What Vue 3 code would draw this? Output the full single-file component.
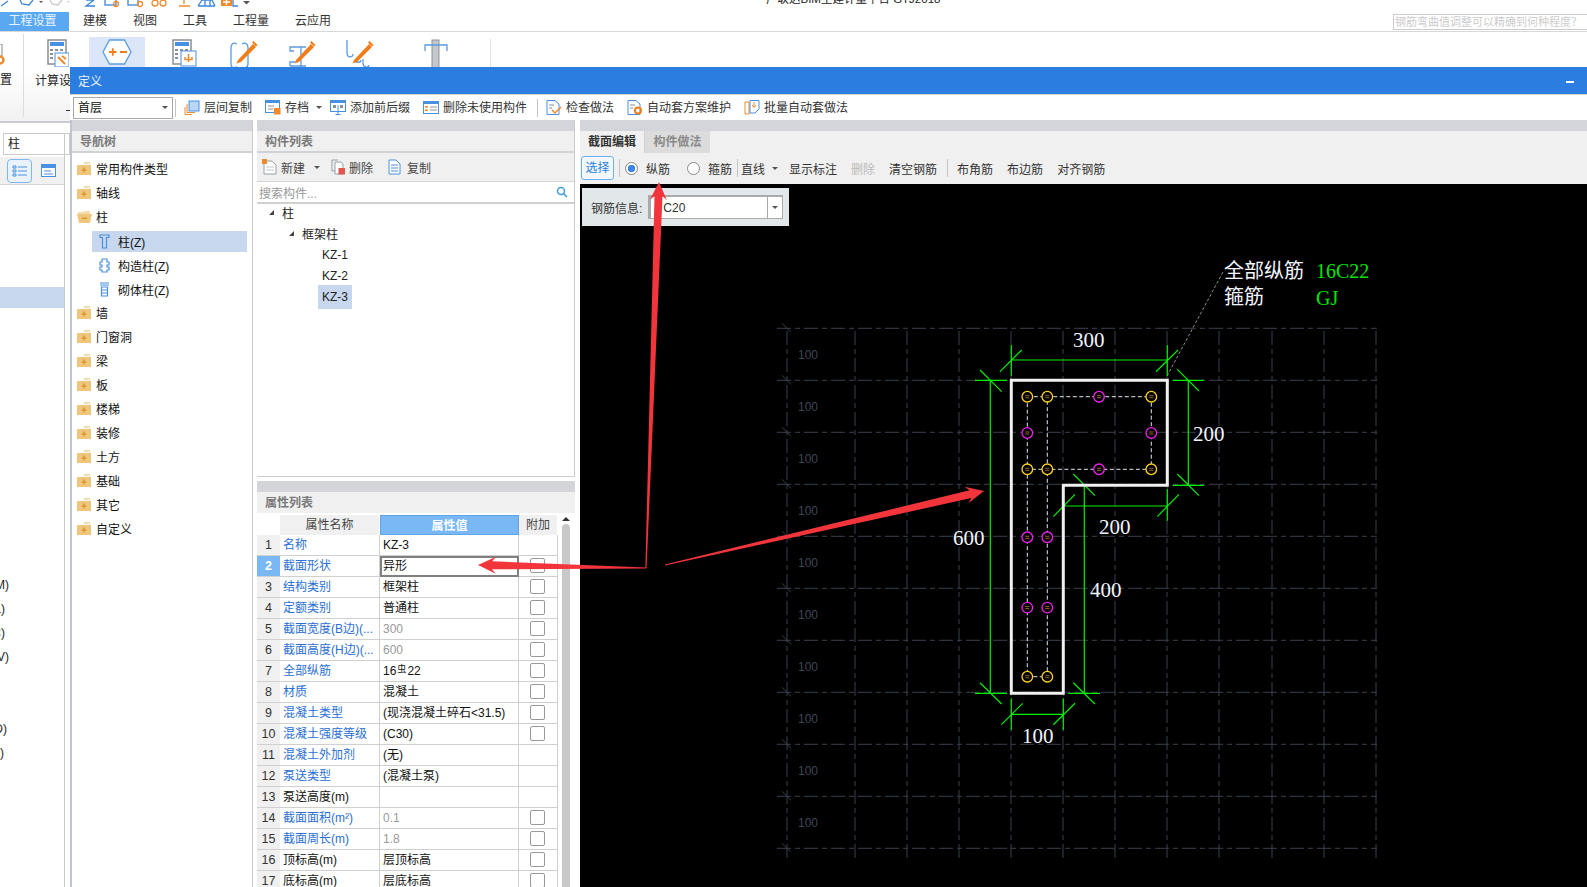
<template>
  <div class="app">
    <!-- quick access row, mostly cut off by the top of the shot -->
    <div class="quick">
      <svg width="260" height="12" viewBox="0 0 260 12" fill="none" stroke="#3d86d8" stroke-width="1.3">
        <path d="M1 6 L8 1" />
        <path d="M20 0 L22 4 L29 5 L33 0" />
        <path d="M39 1 h4 l-2 2z" fill="#555" stroke="none" />
        <path d="M50 0 L52 4 L58 5 L62 0" stroke="#c8c8c8" />
        <path d="M67 1 h3 l-1.500 2z" fill="#ccc" stroke="none" />
        <path d="M86 0 L94 0 M94 0 L86 6 L95 6" />
        <rect x="105" y="-5" width="11" height="10" />
        <circle cx="116" cy="4" r="2.500" stroke="#ef8a2c" />
        <rect x="128" y="-5" width="10" height="10" />
        <circle cx="140" cy="4" r="2.500" stroke="#ef8a2c" />
        <circle cx="155" cy="3" r="3" stroke="#ef8a2c" />
        <circle cx="163" cy="3" r="3" stroke="#ef8a2c" />
        <path d="M179 6 h11 M184 0 v4" stroke="#ef8a2c" />
        <path d="M198 6 L202 0 H212 L215 6 M198 6 H215 M205 0 V6 M210 0 V6" />
        <rect x="221" y="-4" width="11" height="10" fill="#ef8a2c" stroke="none" />
        <path d="M226.500 -1 V5 M223 2 H230" stroke="#fff" />
        <path d="M233 -2 V6 H238" />
        <path d="M243 1 h7 l-3.500 3.500z" fill="#555" stroke="none" />
      </svg>
      <span class="app-title">广联达BIM土建计量平台 GTJ2018</span>
    </div>

    <div class="menu">
      <span class="menu-on">工程设置</span>
      <span v-for="m in menus" :key="m">{{ m }}</span>
      <div class="ask">钢筋弯曲值调整可以精确到何种程度？</div>
    </div>

    <div class="ribbon">
      <div class="rb-first">
        <svg class="gear" width="6" height="22" viewBox="0 0 6 22" fill="none">
          <path d="M0 0 H2 V12" stroke="#888" />
          <circle cx="0" cy="16" r="3.500" stroke="#ef8a2c" stroke-width="2.500" />
        </svg>
        <span class="rb-cut">置</span>
      </div>
      <div class="rb-calc">
        <svg width="22" height="28" viewBox="0 0 22 28">
          <rect x="1" y="1" width="18" height="24" fill="#fff" stroke="#8a8f96" stroke-width="1.500" />
          <rect x="3" y="3" width="14" height="4" fill="#4a90e2" />
          <path d="M3 10 h3 v2 h-3z M8 10 h3 v2 h-3z M13 10 h3 v2 h-3z M3 14 h3 v2 h-3z M8 14 h3 v2 h-3z M3 18 h3 v2 h-3z" fill="#8a8f96" />
          <rect x="8" y="14" width="14" height="14" fill="#fff" stroke="#4a90e2" />
          <path d="M11 18 L18 25 M15 17 L19 20" stroke="#ef8a2c" stroke-width="2" />
        </svg>
        <span class="rb-label">计算设置</span>
        <i class="rb-mark"></i>
      </div>
      <div class="rb-hex">
        <svg width="30" height="26" viewBox="0 0 30 26" fill="none">
          <path d="M7.500 1 H22.500 L29 13 L22.500 25 H7.500 L1 13z" fill="#fff" stroke="#5b9be0" stroke-width="1.300" />
          <path d="M7 13 H14.500 M10.800 9.200 V16.800 M18 13 H25" stroke="#ef7d1a" stroke-width="1.800" />
        </svg>
      </div>
      <div class="rb-tools">
        <svg width="28" height="29" viewBox="0 0 28 29">
          <rect x="1" y="1" width="18" height="24" fill="#fff" stroke="#8a8f96" stroke-width="1.500" />
          <rect x="3" y="3" width="14" height="4" fill="#4a90e2" />
          <path d="M3 10 h3 v2 h-3z M8 10 h3 v2 h-3z M13 10 h3 v2 h-3z M3 14 h3 v2 h-3z M3 18 h3 v2 h-3z" fill="#8a8f96" />
          <rect x="9" y="12" width="15" height="15" fill="#fff" stroke="#4a90e2" />
          <path d="M16.500 15 V23 M13 18 V20.500 H20 V18" stroke="#ef8a2c" stroke-width="1.500" fill="none" />
        </svg>
        <svg v-for="h in hooks" :key="h" width="28" height="29" viewBox="0 0 28 29" fill="none">
          <path :d="h" stroke="#5b9be0" stroke-width="1.300" />
          <path d="M8 21 L23 5 L26 8 L11 23 L6.500 24.500z" fill="#ef7d1a" />
          <path d="M23.500 2 L27.500 6 L26 7.500 L22 3.500z" fill="#ef7d1a" />
        </svg>
        <svg class="rb-t" width="24" height="29" viewBox="0 0 24 29" fill="none">
          <rect x="8" y="1" width="7" height="28" fill="#c3c7cc" stroke="#8f949a" />
          <path d="M1 12 V6 H23 V12" stroke="#5b9be0" stroke-width="1.300" />
        </svg>
        <i class="rb-sep"></i>
      </div>
    </div>

    <div class="side">
      <div class="side-input">柱</div>
      <div class="side-tools">
        <span class="side-btn">
          <svg width="16" height="14" viewBox="0 0 16 14" fill="none" stroke="#4a90e2">
            <path d="M1 2 h3 v2 h-3z M1 6 h3 v2 h-3z M1 10 h3 v2 h-3z M6 3 H15 M6 7 H15 M6 11 H15" />
          </svg>
        </span>
        <svg class="side-ico" width="15" height="13" viewBox="0 0 15 13">
          <rect x="0.500" y="0.500" width="14" height="12" fill="#fff" stroke="#4a90e2" />
          <rect x="0" y="0" width="15" height="4" fill="#4a90e2" />
          <path d="M3 7 H10 M3 10 H12" stroke="#4a90e2" />
        </svg>
      </div>
      <div class="side-list">
        <div v-for="(r, i) in sideRows" :key="i" class="side-row" :class="{ on: i === 0 }">
          <span class="side-clip" :style="{ width: r.w + 'px' }">{{ r.t }}</span>
        </div>
      </div>
    </div>

    <!-- 定义 window -->
    <div class="win">
      <div class="win-title">
        <span>定义</span>
        <i class="win-min"></i>
      </div>

      <div class="win-tools">
        <div class="combo">首层<i class="tri"></i></div>
        <i class="sep"></i>
        <div class="tool">
          <svg width="16" height="15" viewBox="0 0 16 15" fill="none">
            <rect x="5" y="1" width="10" height="10" fill="#b9d6f6" stroke="#4a90e2" />
            <path d="M3 4 V12.500 H11 M1 7 V14.500 H8" stroke="#ef8a2c" />
          </svg>
          层间复制
        </div>
        <div class="tool tool-drop">
          <svg width="16" height="15" viewBox="0 0 16 15" fill="none">
            <rect x="0.500" y="0.500" width="14" height="12" fill="#fff" stroke="#4a90e2" />
            <rect x="0" y="0" width="15" height="3" fill="#4a90e2" />
            <path d="M3 6 H9 M3 9 H8" stroke="#8a8f96" />
            <rect x="9" y="8" width="6.500" height="6.500" fill="#ef8a2c" />
          </svg>
          存档<i class="tri tri-gap"></i>
        </div>
        <div class="tool">
          <svg width="16" height="15" viewBox="0 0 16 15" fill="none">
            <rect x="0.500" y="0.500" width="15" height="11" fill="#fff" stroke="#4a90e2" />
            <rect x="0" y="0" width="16" height="3" fill="#4a90e2" />
            <path d="M3 5 h3 v3 h-3z M10 5 h3 v3 h-3z" fill="#8a8f96" />
            <path d="M8 5 V14 M5.500 14.500 H10.500" stroke="#4a90e2" />
          </svg>
          添加前后缀
        </div>
        <div class="tool">
          <svg width="16" height="15" viewBox="0 0 16 15" fill="none">
            <rect x="0.500" y="1.500" width="15" height="12" fill="#fff" stroke="#4a90e2" />
            <rect x="0" y="1" width="16" height="3" fill="#4a90e2" />
            <path d="M2 6 h3 v1.500 h-3z M2 9.500 h3 v1.500 h-3z" fill="#ef8a2c" />
            <path d="M7 7 H14 M7 10 H14" stroke="#8a8f96" />
          </svg>
          删除未使用构件
        </div>
        <i class="sep"></i>
        <div class="tool">
          <svg width="16" height="15" viewBox="0 0 16 15" fill="none">
            <path d="M1 .5 H9 L13 4 V14.500 H1z" fill="#fff" stroke="#4a90e2" />
            <path d="M3 5 H8 M3 8 H6" stroke="#8a8f96" />
            <path d="M6 10 L9 13 L15 7" stroke="#ef8a2c" stroke-width="1.500" />
          </svg>
          检查做法
        </div>
        <div class="tool">
          <svg width="16" height="15" viewBox="0 0 16 15" fill="none">
            <path d="M1 .5 H9 L13 4 V14.500 H1z" fill="#fff" stroke="#4a90e2" />
            <path d="M3 5 H8 M3 8 H6" stroke="#8a8f96" />
            <circle cx="11" cy="10.500" r="3" stroke="#ef7d1a" stroke-width="2" />
          </svg>
          自动套方案维护
        </div>
        <div class="tool">
          <svg width="16" height="15" viewBox="0 0 16 15" fill="none">
            <path d="M1 2 H5 V14 H1z" stroke="#ef8a2c" />
            <path d="M6 .5 H15 V9 L11 13 H6z" fill="#fff" stroke="#4a90e2" />
            <path d="M10 2 V7 M8 5 L10 7.500 L12 5" stroke="#ef8a2c" />
          </svg>
          批量自动套做法
        </div>
      </div>

      <div class="win-body">
        <!-- nav tree -->
        <section class="nav">
          <header class="head">导航树</header>
          <div class="nav-list">
            <div v-for="n in navRows" :key="n.t" class="nav-row" :class="{ sub: n.sub, on: n.on }">
              <svg v-if="n.sub" width="11" height="15" viewBox="0 0 11 15" fill="none" stroke="#4a90e2" stroke-width="1.200">
                <path v-if="n.kind === 'z'" d="M1 1 H10 V3.500 H7.500 V14 H3.500 V3.500 H1z" />
                <path v-else-if="n.kind === 'g'" d="M3 1 H8 V4 H10 V7 H8 V9 H10 V12 H8 V14 H3 V12 H1 V9 H3 V7 H1 V4 H3z" />
                <path v-else d="M1 1 H10 M1 3 H10 M2.500 5 H8.500 V14 H2.500z M2.500 8 H8.500 M2.500 11 H8.500" />
              </svg>
              <svg v-else width="15" height="14" viewBox="0 0 15 14">
                <template v-if="n.open">
                  <path d="M1 2 H6 L7 1 H13 V4 H1z" fill="#f6dca8" />
                  <path d="M0 4 H15 L13 13 H2z" fill="#efc67c" />
                  <rect x="5" y="7.500" width="5" height="1.500" fill="#d89a30" />
                </template>
                <template v-else>
                  <path d="M7 0 H13 V2 H7z" fill="#f6dca8" />
                  <rect x="0" y="3" width="14" height="10" fill="#efc67c" />
                  <path d="M7 5.500 V10.500 M4.500 8 H9.500" stroke="#d89a30" stroke-width="1.500" />
                </template>
              </svg>
              <span>{{ n.t }}</span>
            </div>
          </div>
        </section>

        <div class="mid">
          <!-- member list -->
          <section class="members">
            <header class="head">构件列表</header>
            <div class="mem-tools">
              <span class="mt">
                <svg width="15" height="16" viewBox="0 0 15 16" fill="none">
                  <path d="M2 2 H10 L14 6 V15 H2z" fill="#fff" stroke="#9aa0a6" />
                  <path d="M4 8 H12 M4 11 H12" stroke="#c3c7cc" />
                  <rect x="0" y="0" width="5" height="5" fill="#ef8a2c" />
                </svg>
                新建<i class="tri tri-gap"></i>
              </span>
              <span class="mt mt-narrow">
                <svg width="15" height="16" viewBox="0 0 15 16" fill="none">
                  <path d="M1 1 H7 M1 1 V12 H4" stroke="#9aa0a6" />
                  <path d="M4 3 H10 L12 5 V15 H4z" fill="#fff" stroke="#9aa0a6" />
                  <rect x="7.500" y="9" width="6.500" height="6.500" fill="#e2564f" />
                </svg>
                删除
              </span>
              <span class="mt mt-copy">
                <svg width="15" height="16" viewBox="0 0 15 16" fill="none">
                  <path d="M1 1 H8 L12 5 V15 H1z" fill="#fff" stroke="#4a90e2" />
                  <path d="M3 6 H10 M3 9 H10 M3 12 H10" stroke="#4a90e2" />
                </svg>
                复制
              </span>
            </div>
            <div class="search">
              <span>搜索构件...</span>
              <svg width="12" height="12" viewBox="0 0 12 12" fill="none" stroke="#3d9be0" stroke-width="1.500">
                <circle cx="5" cy="5" r="3.500" />
                <path d="M7.500 7.500 L11 11" />
              </svg>
            </div>
            <div class="tree">
              <div class="tree-row lv0"><i class="twist"></i>柱</div>
              <div class="tree-row lv1"><i class="twist"></i>框架柱</div>
              <div class="tree-row lv2">KZ-1</div>
              <div class="tree-row lv2">KZ-2</div>
              <div class="tree-row lv2"><span class="tree-on">KZ-3</span></div>
            </div>
          </section>

          <!-- attribute table -->
          <section class="attrs">
            <header class="head">属性列表</header>
            <div class="attr-wrap">
              <div class="attr-table">
                <div class="hd corner"></div>
                <div class="hd">属性名称</div>
                <div class="hd hd-on">属性值</div>
                <div class="hd">附加</div>
                <template v-for="r in attrRows" :key="r.n">
                  <div class="num" :class="{ 'num-on': r.n === 2 }">{{ r.n }}</div>
                  <div class="cell" :class="{ link: r.link }">{{ r.name }}</div>
                  <div class="cell" :class="{ dim: r.dim, picked: r.n === 2 }">
                    <template v-if="r.n === 7">16<small class="bar-mark">虫</small>22</template>
                    <template v-else>{{ r.val }}</template>
                  </div>
                  <div class="cell chk"><i v-if="r.chk" class="box"></i></div>
                </template>
              </div>
              <div class="scroll"><i class="scroll-up"></i><i class="thumb"></i></div>
            </div>
          </section>
        </div>

        <!-- section editor -->
        <section class="editor">
          <div class="tabs">
            <span class="tab tab-on">截面编辑</span>
            <span class="tab">构件做法</span>
          </div>
          <div class="ed-tools">
            <span class="pick">选择</span>
            <i class="sep ed-sep"></i>
            <span class="radio-item"><i class="radio radio-on"></i>纵筋</span>
            <span class="radio-item last"><i class="radio"></i>箍筋</span>
            <i class="sep ed-sep ed-sep2"></i>
            <span class="line-drop">直线<i class="tri tri-gap"></i></span>
            <span>显示标注</span>
            <span class="off">删除</span>
            <span>清空钢筋</span>
            <i class="sep ed-sep ed-sep3"></i>
            <span>布角筋</span>
            <span>布边筋</span>
            <span>对齐钢筋</span>
          </div>
          <div class="canvas">
            <svg class="cad" width="1007" height="703" viewBox="580 184 1007 703">
              <g stroke="#3a414e" stroke-width="1" fill="none" stroke-dasharray="14 4 5 4">
                <path v-for="y in gridY" :key="'h' + y" :d="`M777 ${y} H1377`" />
                <path v-for="x in gridX" :key="'v' + x" :d="`M${x} 331 V860`" />
              </g>
              <g stroke="#3a414e" fill="none">
                <path v-for="y in gridY" :key="'t' + y" :d="`M782 ${y - 5} L791 ${y + 4}`" />
              </g>
              <text v-for="y in labelY" :key="'l' + y" x="798" :y="y" class="grid-label">100</text>

              <path d="M1167 376 L1223 272" stroke="#8a8a8a" stroke-width="1" stroke-dasharray="3 2" fill="none" />

              <!-- dimensions -->
              <g stroke="#00f000" stroke-width="1.200" fill="none">
                <path v-for="d in dims" :key="d" :d="d" />
              </g>

              <!-- stirrups -->
              <g stroke="#dfe6f2" stroke-width="1" stroke-dasharray="4 2.500" fill="none">
                <path d="M1027.300 396.700 H1151.300 V469.300 H1027.300" />
                <path d="M1027.300 396.700 V676.700 H1047.300 V396.700" />
              </g>

              <path d="M1011.300 380.300 H1167.300 V485.300 H1063.300 V693.300 H1011.300z" fill="none" stroke="#f0f0f0" stroke-width="3" />

              <!-- bars -->
              <g v-for="b in bars" :key="b.x + '-' + b.y">
                <circle :cx="b.x" :cy="b.y" r="5.300" fill="#000" :stroke="b.c" stroke-width="1.300" />
                <path :d="`M${b.x - 2} ${b.y - 1} h4 M${b.x - 2} ${b.y + 1} h4`" stroke="#d9913a" stroke-width="0.700" />
              </g>

              <g class="dim-text">
                <text x="1073" y="347">300</text>
                <text x="1193" y="441">200</text>
                <text x="1099" y="534">200</text>
                <text x="1090" y="597">400</text>
                <text x="953" y="545">600</text>
                <text x="1022" y="743">100</text>
              </g>
              <text x="1224" y="278" class="cad-cn">全部纵筋</text>
              <text x="1224" y="304" class="cad-cn">箍筋</text>
              <text x="1316" y="278" class="cad-code">16C22</text>
              <text x="1316" y="305" class="cad-code">GJ</text>
            </svg>

            <div class="bar-info">
              <span>钢筋信息:</span>
              <div class="bar-combo">
                <span class="bar-val">C20</span>
                <span class="bar-arrow"><i class="tri"></i></span>
              </div>
            </div>
          </div>
        </section>
      </div>
    </div>

    <!-- red annotation arrows drawn over the shot -->
    <svg class="arrows" width="1587" height="887" viewBox="0 0 1587 887">
      <polygon v-for="a in arrows" :key="a" :points="a" fill="#f2353b" />
    </svg>
  </div>
</template>

<script setup>
const menus = ['建模', '视图', '工具', '工程量', '云应用']

const hooks = [
  'M7 5 C3 3 1 5 1 9 V25 C1 29 3 29 7 28 M12 5 C16 3 18 5 18 9 V25 C18 29 14 29 12 28',
  'M6 12 H2 V8 H18 M13 8 V29 M2 27 V23 H7 M2 27 H18',
  'M1 1 V14 C1 19 7 19 7 15 M9 21 C9 24 15 24 15 21 M17 20 V24 C17 29 23 29 23 26',
]

const sideTails = {
  12: { t: '(M)', w: 9 },
  13: { t: '(L)', w: 5 },
  14: { t: '(C)', w: 5 },
  15: { t: '(V)', w: 9 },
  18: { t: '(D)', w: 7 },
  19: { t: ')', w: 4 },
}
const sideRows = Array.from({ length: 20 }, (_, i) => sideTails[i] || { t: '', w: 9 })

const navRows = [
  { t: '常用构件类型' },
  { t: '轴线' },
  { t: '柱', open: true },
  { t: '柱(Z)', sub: true, on: true, kind: 'z' },
  { t: '构造柱(Z)', sub: true, kind: 'g' },
  { t: '砌体柱(Z)', sub: true, kind: 'q' },
  { t: '墙' },
  { t: '门窗洞' },
  { t: '梁' },
  { t: '板' },
  { t: '楼梯' },
  { t: '装修' },
  { t: '土方' },
  { t: '基础' },
  { t: '其它' },
  { t: '自定义' },
]

const attrRows = [
  { n: 1, name: '名称', val: 'KZ-3', link: true },
  { n: 2, name: '截面形状', val: '异形', link: true, chk: true },
  { n: 3, name: '结构类别', val: '框架柱', link: true, chk: true },
  { n: 4, name: '定额类别', val: '普通柱', link: true, chk: true },
  { n: 5, name: '截面宽度(B边)(...', val: '300', link: true, chk: true, dim: true },
  { n: 6, name: '截面高度(H边)(...', val: '600', link: true, chk: true, dim: true },
  { n: 7, name: '全部纵筋', val: '16', link: true, chk: true },
  { n: 8, name: '材质', val: '混凝土', link: true, chk: true },
  { n: 9, name: '混凝土类型', val: '(现浇混凝土碎石<31.5)', link: true, chk: true },
  { n: 10, name: '混凝土强度等级', val: '(C30)', link: true, chk: true },
  { n: 11, name: '混凝土外加剂', val: '(无)', link: true },
  { n: 12, name: '泵送类型', val: '(混凝土泵)', link: true },
  { n: 13, name: '泵送高度(m)', val: '' },
  { n: 14, name: '截面面积(m²)', val: '0.1', link: true, chk: true, dim: true },
  { n: 15, name: '截面周长(m)', val: '1.8', link: true, chk: true, dim: true },
  { n: 16, name: '顶标高(m)', val: '层顶标高', chk: true },
  { n: 17, name: '底标高(m)', val: '层底标高', chk: true },
]

// drawing grid, 52px per 100mm
const gridY = Array.from({ length: 11 }, (_, i) => 328.3 + i * 52)
const gridX = [787, 855, 907, 959, 1011, 1063, 1115, 1167, 1219, 1272, 1324, 1376]
const labelY = Array.from({ length: 10 }, (_, i) => 359 + i * 52)

const dims = [
  // 300 on top
  'M1011.3 360 H1167.3 M1011.3 345 V376 M1167.3 345 V376 M1000 371.7 L1021.7 350 M1156 371.7 L1178 350',
  // 600 on the left
  'M990.3 380.3 V693.3 M975 380.3 H1007 M975 693.3 H1007 M980 370 L1001.7 391.7 M980 682.7 L1001.7 704',
  // 200 on the right
  'M1188.3 380.3 V485.3 M1172.7 380.3 H1204 M1172.7 485.3 H1204 M1177.3 369.3 L1199 391 M1177.3 474 L1199 495.7',
  // 400 inside
  'M1084.3 485.3 V693.3 M1068.3 485.3 H1100 M1068.3 693.3 H1100 M1073.3 474 L1095 495.7 M1073.3 682.7 L1095 704',
  // 200 under the flange
  'M1063.3 506 H1167.3 M1063.3 490 V520.7 M1167.3 489 V520.7 M1053.3 516.7 L1075 494.3 M1157.3 516.7 L1179 494.3',
  // 100 at the bottom
  'M1011.3 714.3 H1063.3 M1011.3 698.3 V730 M1063.3 698.3 V730 M1001.3 724.7 L1022.7 703.3 M1053.3 724.7 L1075 703.3',
]

const yellow = '#ffd21e'
const pink = '#f020f0'
const bars = [
  { x: 1027.3, y: 396.7, c: yellow },
  { x: 1047.3, y: 396.7, c: yellow },
  { x: 1099, y: 396.7, c: pink },
  { x: 1151.3, y: 396.7, c: yellow },
  { x: 1027.3, y: 433, c: pink },
  { x: 1151.3, y: 433, c: pink },
  { x: 1027.3, y: 469.3, c: yellow },
  { x: 1047.3, y: 469.3, c: yellow },
  { x: 1099, y: 469.3, c: pink },
  { x: 1151.3, y: 469.3, c: yellow },
  { x: 1027.3, y: 537.3, c: pink },
  { x: 1047.3, y: 537.3, c: pink },
  { x: 1027.3, y: 607.6, c: pink },
  { x: 1047.3, y: 607.6, c: pink },
  { x: 1027.3, y: 676.7, c: yellow },
  { x: 1047.3, y: 676.7, c: yellow },
]

// tapered arrow: thin at the tail, wider at the neck
function arrow(x1, y1, x2, y2) {
  const len = Math.hypot(x2 - x1, y2 - y1)
  const ux = (x2 - x1) / len
  const uy = (y2 - y1) / len
  const nx = -uy
  const ny = ux
  const at = (back, side) => `${(x2 - ux * back + nx * side).toFixed(1)},${(y2 - uy * back + ny * side).toFixed(1)}`
  return [
    at(len, 0.6), at(14, 4), at(18, 8.5), at(0, 0), at(18, -8.5), at(14, -4), at(len, -0.6),
  ].join(' ')
}

const arrows = [
  arrow(646, 568, 659, 182),
  arrow(665, 565, 984, 491),
  arrow(646, 568, 478, 565),
]
</script>

<style scoped>
.app {
  position: relative;
  width: 1587px;
  height: 887px;
  overflow: hidden;
  background: #fff;
  font-family: "Liberation Sans", "Noto Sans CJK SC", sans-serif;
  font-size: 12px;
  color: #222;
}
i { display: block; font-style: normal; }

.quick {
  position: relative;
  height: 12px;
  overflow: hidden;
}
.quick svg { display: block; }
.app-title {
  position: absolute;
  left: 766px;
  top: -9px;
  line-height: 16px;
  font-size: 11.500px;
}

.menu {
  display: flex;
  align-items: center;
  gap: 26px;
  height: 19px;
  border-bottom: 1px solid #d8d8d8;
  line-height: 19px;
  color: #333;
}
.menu-on {
  width: 69px;
  margin-right: -12px;
  padding-right: 4px;
  box-sizing: border-box;
  background: #5aa8f2;
  color: #e8f3ff;
  text-align: center;
}
.ask {
  margin-left: auto;
  width: 194px;
  height: 16px;
  border: 1px solid #ccc;
  border-right: none;
  box-sizing: border-box;
  color: #ccc;
  line-height: 14px;
  font-size: 11px;
  padding-left: 1px;
  white-space: nowrap;
  overflow: hidden;
}

.ribbon {
  display: flex;
  height: 91px;
  border-bottom: 2px solid #c8ccd2;
  box-sizing: border-box;
  background: linear-gradient(#fff 45%, #f1f1f1);
}
.rb-first {
  width: 24px;
  border-right: 1px solid #dcdcdc;
  box-sizing: border-box;
  margin: 2px 0 4px;
  display: flex;
  flex-direction: column;
}
.gear { margin-top: 10px; }
.rb-cut { margin-top: 6px; font-size: 12px; line-height: 16px; }
.rb-calc {
  width: 65px;
  overflow: hidden;
  display: flex;
  flex-direction: column;
  padding-top: 7px;
}
.rb-calc svg { margin-left: 23px; }
.rb-label { margin: 6px 0 0 11px; white-space: nowrap; line-height: 16px; }
.rb-mark {
  width: 4px;
  height: 1px;
  margin: 21px 0 0 42px;
  background: #333;
}
.rb-hex {
  width: 56px;
  height: 31px;
  margin-top: 5px;
  background: #dbe7f8;
  display: flex;
  justify-content: center;
  padding-top: 2px;
  box-sizing: border-box;
}
.rb-tools {
  display: flex;
  gap: 30px;
  margin-left: 27px;
  padding-top: 7px;
  height: 80px;
}
.rb-t { margin-left: 20px; }
.rb-sep {
  width: 1px;
  height: 60px;
  margin-left: 12px;
  background: #e2e2e2;
}

.side {
  width: 65px;
  border-right: 1px solid #c8c8c8;
  box-sizing: border-box;
  height: 766px;
}
.side-input {
  margin: 10px -6px 0 3px;
  height: 22px;
  border: 1px solid #ccc;
  box-sizing: border-box;
  padding-left: 4px;
  line-height: 20px;
  font-size: 12px;
}
.side-tools {
  display: flex;
  align-items: center;
  gap: 9px;
  margin-top: 2px;
  height: 28px;
  padding-left: 7px;
  background: #f0f0f0;
  border-bottom: 1px solid #d5d5d5;
  box-sizing: border-box;
}
.side-btn {
  display: flex;
  align-items: center;
  justify-content: center;
  width: 25px;
  height: 24px;
  border: 1px solid #7db8f2;
  border-radius: 4px;
  box-sizing: border-box;
  background: #eaf3fd;
}
.side-list { margin-top: 102px; }
.side-row { height: 24px; line-height: 21px; }
.side-row:first-child { height: 21px; margin-bottom: 3px; }
.side-row.on { background: #c7d7ee; }
.side-clip {
  display: flex;
  justify-content: flex-end;
  overflow: hidden;
  white-space: nowrap;
  font-size: 12px;
}

.win {
  position: absolute;
  left: 70px;
  top: 67px;
  right: 0;
  bottom: 0;
  background: #fff;
  display: flex;
  flex-direction: column;
}
.win-title {
  display: flex;
  align-items: center;
  justify-content: space-between;
  height: 27px;
  padding: 0 13px 0 8px;
  background: #2c7de0;
  color: #e8f2ff;
  font-size: 12px;
  flex: none;
}
.win-min { width: 8px; height: 2px; margin-top: 3px; background: #fff; }

.win-tools {
  display: flex;
  align-items: center;
  gap: 13px;
  height: 26px;
  flex: none;
  border-top: 1px solid #cfd2d6;
  box-sizing: border-box;
  color: #333;
}
.combo {
  display: flex;
  align-items: center;
  justify-content: space-between;
  width: 100px;
  height: 22px;
  margin: 0 -8px 0 3px;
  padding: 0 4px;
  border: 1px solid #aaa;
  box-sizing: border-box;
  line-height: 20px;
  color: #111;
}
.tri {
  width: 0;
  height: 0;
  border-left: 3.500px solid transparent;
  border-right: 3.500px solid transparent;
  border-top: 3.500px solid #555;
}
.tri-gap { margin-left: 7px; }
.sep {
  width: 1px;
  height: 18px;
  margin: 0 -5px 0 -3px;
  background: #c4c4c4;
  flex: none;
}
.tool {
  display: flex;
  align-items: center;
  gap: 4px;
  white-space: nowrap;
  line-height: 22px;
}
.tool-drop { margin-right: -5px; }
.tool-drop .tri-gap { margin-left: 3px; }

.win-body {
  flex: 1;
  display: flex;
  min-height: 0;
}
.head {
  height: 33px;
  padding: 1px 0 0 8px;
  box-sizing: border-box;
  border-top: 11px solid #d3d5db;
  background: #f0f0f0;
  border-bottom: 2px solid #cfd2d6;
  line-height: 20px;
  font-weight: 700;
  color: #7a7a7a;
  background-clip: padding-box;
}

.nav {
  width: 183px;
  flex: none;
  border-left: 2px solid #c0c6d0;
  border-right: 1px solid #c8c8c8;
  box-sizing: border-box;
}
.nav-list {
  display: flex;
  flex-direction: column;
  padding: 3.500px 5px 0 5px;
}
.nav-row {
  display: flex;
  align-items: center;
  gap: 4px;
  height: 24px;
  white-space: nowrap;
  color: #111;
}
.nav-row.sub {
  margin: 2px 0 1px 15px;
  padding-left: 7px;
  gap: 8px;
  height: 21px;
}
.nav-row.on { background: #c7d7ee; }

.mid {
  width: 318px;
  margin-left: 4px;
  flex: none;
  display: flex;
  flex-direction: column;
}
.members {
  height: 357px;
  flex: none;
  border-bottom: 1px solid #ccc;
  border-right: 1px solid #ccc;
  box-sizing: border-box;
}
.mem-tools {
  display: flex;
  align-items: center;
  gap: 11px;
  height: 29px;
  padding-left: 5px;
  background: #f0f0f0;
  border-bottom: 1px solid #d5d5d5;
  box-sizing: border-box;
  color: #444;
}
.mem-tools .tri-gap { margin-left: 5px; }
.mt { display: flex; align-items: center; gap: 4px; }
.mt-narrow { gap: 3px; }
.mt-copy { margin-left: 4px; }
.search {
  display: flex;
  align-items: center;
  justify-content: space-between;
  height: 20px;
  padding: 0 6px 0 2px;
  border-bottom: 2px solid #d0d0d0;
  color: #999;
}
.tree { margin-top: -2px; }
.tree-row {
  display: flex;
  align-items: center;
  height: 21px;
  color: #222;
}
.lv0 { padding-left: 12px; }
.lv1 { padding-left: 32px; }
.lv2 { padding-left: 65px; }
.twist {
  width: 0;
  height: 0;
  margin-right: 8px;
  border-left: 5px solid transparent;
  border-bottom: 5px solid #444;
}
.tree-on {
  padding: 0 4px;
  margin-left: -4px;
  background: #c7d7ee;
  line-height: 24px;
}

.attrs { margin-top: 4px; flex: 1; min-height: 0; overflow: hidden; }
.attrs .head { height: 32px; border-bottom: none; background-color: #f0f0f0; }
.attr-wrap { display: flex; margin-top: 2px; }
.attr-table {
  display: grid;
  grid-template-columns: 23px 100px 139px 39px;
  grid-template-rows: 20px;
  grid-auto-rows: 21px;
  width: 301px;
  flex: none;
}
.hd {
  background: #f0f0f0;
  text-align: center;
  line-height: 20px;
  color: #444;
  border-right: 1px solid #fff;
}
.corner { background: #fff; }
.hd-on {
  background: #7ab8f5;
  color: #fff;
  font-weight: 700;
  border: 1px solid #5fa4e8;
  box-sizing: border-box;
}
.num {
  background: #f0f0f0;
  text-align: center;
  line-height: 21px;
  font-size: 12.500px;
  color: #333;
  border-bottom: 1px solid #d0d0d0;
  box-sizing: border-box;
}
.num-on { background: #7ab8f5; color: #fff; font-weight: 700; }
.cell {
  padding-left: 3px;
  line-height: 20px;
  white-space: nowrap;
  overflow: hidden;
  border-right: 1px solid #d0d0d0;
  border-bottom: 1px solid #d0d0d0;
  box-sizing: border-box;
  color: #111;
}
.link { color: #2a6fd6; }
.dim { color: #999; }
.picked { border: 2px solid #808080; line-height: 17px; padding-left: 1px; }
.bar-mark { font-size: 9px; position: relative; top: -3px; margin: 0 1px; }
.chk {
  display: flex;
  align-items: center;
  justify-content: center;
  padding: 0;
}
.box {
  width: 13px;
  height: 13px;
  border: 1px solid #999;
  border-radius: 2px;
  margin: 0 2px 1px 0;
}
.scroll {
  width: 16px;
  display: flex;
  flex-direction: column;
  align-items: center;
  background: #fff;
}
.scroll-up {
  width: 0;
  height: 0;
  margin-top: 2px;
  border-left: 4px solid transparent;
  border-right: 4px solid transparent;
  border-bottom: 4px solid #333;
}
.thumb {
  width: 8px;
  height: 400px;
  margin-top: 3px;
  border-radius: 4px;
  background: #c8c8c8;
}

.editor {
  flex: 1;
  margin-left: 5px;
  min-width: 0;
  display: flex;
  flex-direction: column;
  border-top: 11px solid #d3d5db;
  box-sizing: border-box;
}
.tabs {
  display: flex;
  height: 22px;
  flex: none;
  background: #f0f0f0;
}
.tab {
  width: 65px;
  text-align: center;
  line-height: 23px;
  font-weight: 700;
  color: #8a8a8a;
  background: #dcdcdc;
}
.tab-on { background: #f0f0f0; color: #333; border-right: 1px solid #d0d0d0; box-sizing: border-box; }
.ed-tools {
  display: flex;
  align-items: center;
  gap: 14px;
  height: 31px;
  flex: none;
  padding: 0 0 1px 1px;
  box-sizing: border-box;
  background: #f0f0f0;
  color: #333;
}
.pick {
  width: 33px;
  height: 24px;
  border: 1px solid #6ab0f0;
  border-radius: 3px;
  box-sizing: border-box;
  background: #f2f8fe;
  color: #2a7fd8;
  text-align: center;
  line-height: 22px;
}
.ed-sep { margin: 0 -9px; }
.ed-sep2 { margin-right: -11px; }
.ed-sep3 { margin: 0 -5px 0 -4px; }
.radio-item { display: flex; align-items: center; gap: 8px; }
.radio-item:not(.last) { margin-right: 3px; }
.radio {
  width: 13px;
  height: 13px;
  border: 1px solid #888;
  border-radius: 50%;
  box-sizing: border-box;
  background: #fff;
}
.radio-on { background: radial-gradient(circle, #3d86e8 3.500px, #fff 4px); }
.line-drop { display: flex; align-items: center; margin-right: -3px; }
.off { color: #bbb; }

.canvas {
  position: relative;
  flex: 1;
  min-height: 0;
  background: #000;
  overflow: hidden;
}
.cad { display: block; }
.grid-label {
  fill: #3f4757;
  font-family: "Liberation Sans", sans-serif;
  font-size: 12px;
}
.dim-text {
  fill: #f2f6ff;
  font-family: "Liberation Serif", serif;
  font-size: 21px;
}
.cad-cn {
  fill: #f2f6ff;
  font-family: "Noto Sans CJK SC", sans-serif;
  font-size: 20px;
}
.cad-code {
  fill: #00e600;
  font-family: "Liberation Serif", serif;
  font-size: 20px;
}
.bar-info {
  position: absolute;
  left: 2px;
  top: 4px;
  width: 207px;
  height: 38px;
  display: flex;
  align-items: center;
  padding-left: 9px;
  box-sizing: border-box;
  background: #e2e8ea;
  color: #333;
}
.bar-combo {
  display: flex;
  width: 135px;
  height: 24px;
  margin-left: 6px;
  border: 1px solid #aaa;
  border-left-width: 3px;
  border-top-width: 2px;
  box-sizing: border-box;
  background: #fff;
}
.bar-val { flex: 1; padding-left: 12px; line-height: 22px; }
.bar-arrow {
  width: 14px;
  display: flex;
  align-items: center;
  justify-content: center;
  border-left: 1px solid #aaa;
}

.arrows {
  position: absolute;
  left: 0;
  top: 0;
  pointer-events: none;
}
</style>
